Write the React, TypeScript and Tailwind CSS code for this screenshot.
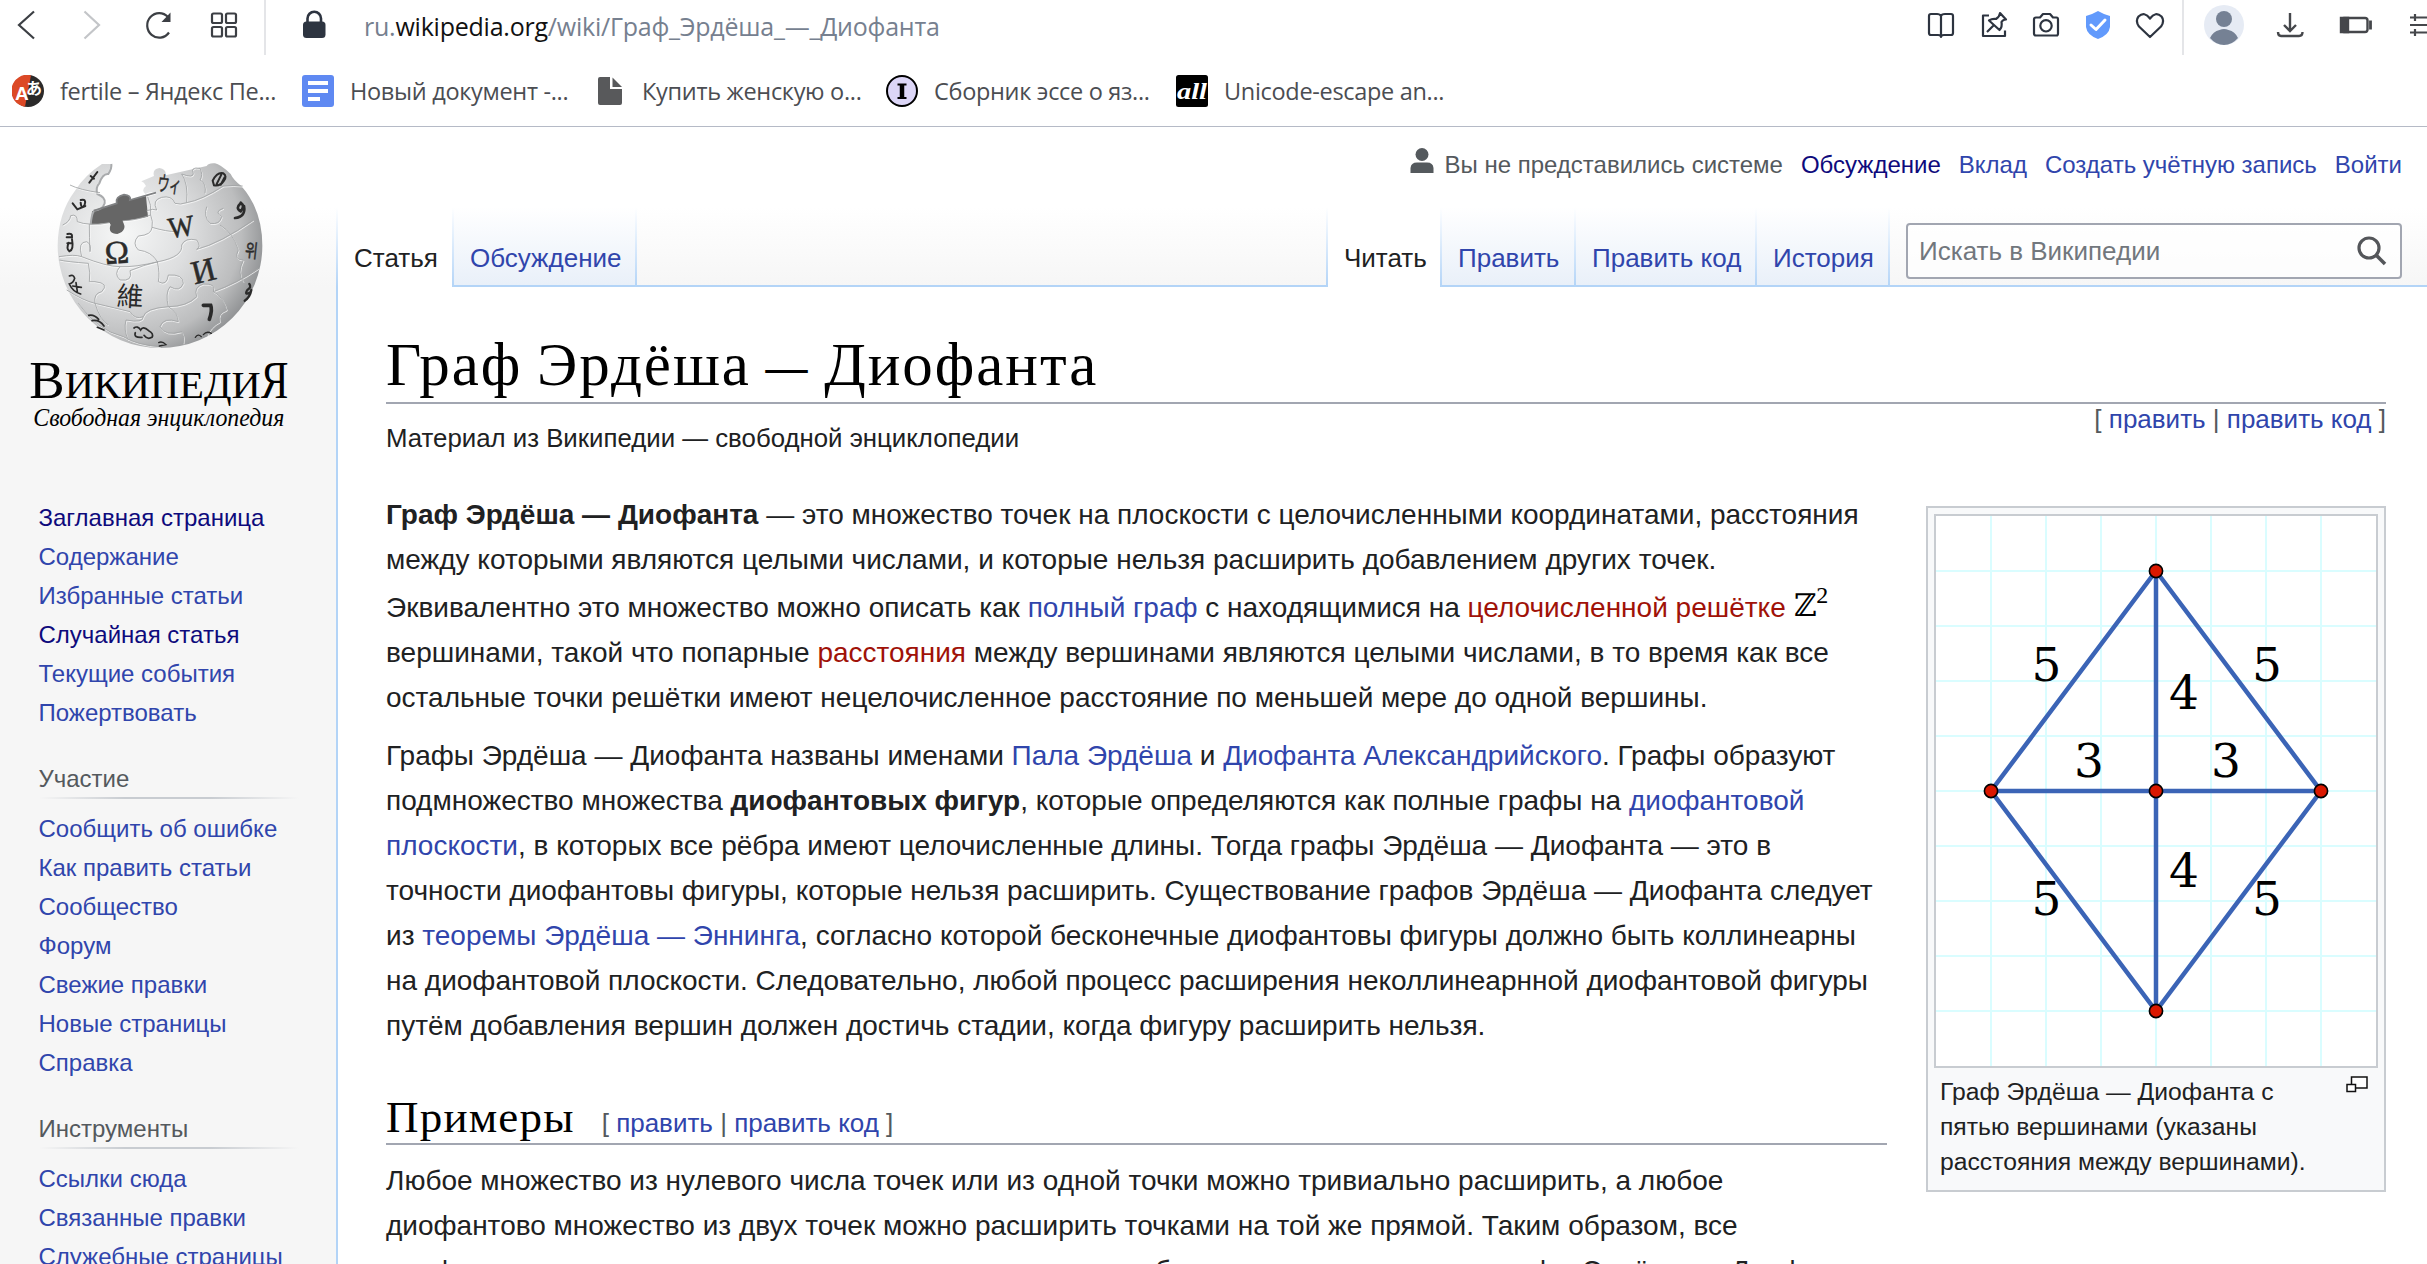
import React from "react";

const link = "text-[#3045ac]";
const visited = "text-[#0e0a7c]";
const red = "text-[#a01208]";

function A({ children, c = link }: { children: React.ReactNode; c?: string }) {
  return <a className={c}>{children}</a>;
}

function Toolbar() {
  return (
    <div className="flex h-[55px] shrink-0">
      <div className="flex w-[266px] shrink-0 items-start border-r-2 border-[#e4e5e8]">
        <svg width="264" height="50" viewBox="0 0 264 50" fill="none" stroke="#3c3f44" strokeWidth="2.2">
          <path d="M34 11.5 L19 25 L34 38.5" />
          <path d="M84.500 11.500 L99 25 L84.500 38.500" stroke="#c3c5c8" />
          <path d="M169 32.500 A12 12.300 0 1 1 168 17" />
          <path d="M170.500 12.500 L170.500 22 L161.500 22 Z" fill="#3c3f44" stroke="none" />
          <rect x="212" y="13.500" width="10" height="9.500" rx="1.500" />
          <rect x="226" y="13.500" width="10" height="9.500" rx="1.500" />
          <rect x="212" y="27" width="10" height="9.500" rx="1.500" />
          <rect x="226" y="27" width="10" height="9.500" rx="1.500" />
        </svg>
      </div>
      <svg width="98" height="50" viewBox="266 0 98 50" className="shrink-0">
        <rect x="303" y="21.500" width="22.500" height="16.500" rx="3.500" fill="#2d3440" />
        <path d="M307.500 23 V18.500 A6.700 6.700 0 0 1 321 18.500 V23" fill="none" stroke="#2d3440" strokeWidth="2.600" />
      </svg>
      <div className="flex-1 whitespace-nowrap font-['Open_Sans',sans-serif] text-[25px] leading-[52px] tracking-[-0.230px] text-[#76808f]">
        ru.<span className="text-[#111]">wikipedia.org</span>/wiki/Граф_Эрдёша_—_Диофанта
      </div>
      <div className="flex w-[266px] shrink-0 items-start border-r-2 border-[#e4e5e8]">
        <svg width="264" height="50" viewBox="1918 0 264 50" fill="none" stroke="#2d3440" strokeWidth="2.200" strokeLinejoin="round">
          <path d="M1941 16 Q1940 14 1937 14 H1931 Q1929 14 1929 16 V33 Q1929 35 1931 35 H1938 Q1941 35 1941 37 Q1941 35 1944 35 H1951 Q1953 35 1953 33 V16 Q1953 14 1951 14 H1945 Q1941.500 14 1941 16 V36" />
          <path d="M1989 15.500 H1983 V36 H2005 V30.500" />
          <path d="M2000 13 L2006 19.500 Q2003 19.500 2001.500 22 Q2002.500 27 1999.500 30 L1989 20.500 Q1992 18.500 1996 19 Q2000 16 2000 13 Z M1994 25 L1987 32" />
          <path d="M2036 17.500 H2040 L2043 14 H2050 L2053 17.500 H2056.500 Q2058 17.500 2058 19.500 V33.500 Q2058 35.500 2056.500 35.500 H2036 Q2034 35.500 2034 33.500 V19.500 Q2034 17.500 2036 17.500 Z" />
          <circle cx="2046" cy="25.800" r="5.700" />
          <path d="M2098 11 Q2103 14 2110 16 V27 Q2109 35 2098 39 Q2087 35 2086 27 V16 Q2093 14 2098 11 Z" fill="#629afc" stroke="none" />
          <path d="M2091 25 L2096 29.500 L2105 20" stroke="#fff" strokeWidth="3" strokeLinecap="round" />
          <path d="M2150 37 L2139 26.500 Q2135 21 2138.500 16.500 Q2144.500 11 2150 18.500 Q2155.500 11 2161.500 16.500 Q2165 21 2161 26.500 Z" />
        </svg>
      </div>
      <svg width="243" height="50" viewBox="2184 0 243 50" fill="none" stroke="#45474b" strokeWidth="2.400" className="shrink-0">
        <circle cx="2224" cy="25" r="20" fill="#e6ebf4" stroke="none" />
        <circle cx="2224" cy="19" r="8" fill="#758194" stroke="none" />
        <path d="M2210 38 Q2213 31.500 2219.500 30 Q2224 28 2228.500 30 Q2235 31.500 2238 38 Q2232 45 2224 45 Q2216 45 2210 38 Z" fill="#758194" stroke="none" />
        <path d="M2290 13 V31 M2284 25 L2290 31 L2296 25 M2278 32 Q2278 36 2281 36 H2299 Q2302.500 36 2302.500 32" />
        <rect x="2341.500" y="18" width="26" height="14" rx="2.500" />
        <path d="M2341 18 H2348 V32 H2341 Z" fill="#45474b" />
        <path d="M2370.500 20.500 V29.500" strokeWidth="2.800" />
        <path d="M2410 17.500 H2427 M2410 25 H2427 M2410 32.500 H2427 M2415 14 V21 M2415 29 V36" strokeWidth="2.200" />
      </svg>
    </div>
  );
}

const bookmarks = [
  { w: "w-[290px]", gap: "gap-4", t: "fertile – Яндекс Пе..." },
  { w: "w-[296px]", gap: "gap-4", t: "Новый документ -..." },
  { w: "w-[288px]", gap: "gap-5", t: "Купить женскую о..." },
  { w: "w-[290px]", gap: "gap-4", t: "Сборник эссе о яз..." },
  { w: "w-[290px]", gap: "gap-4", t: "Unicode-escape an..." },
];

function BookmarkIcon({ i }: { i: number }) {
  if (i === 0)
    return (
      <svg width="32" height="32" viewBox="0 0 32 32" className="shrink-0">
        <circle cx="16" cy="16" r="16" fill="#2b2a2a" />
        <path d="M19 0.300 A16 16 0 1 0 13 31.700 Z" fill="#dc4926" />
        <text x="3" y="25" fontSize="19" fontFamily="Liberation Sans" fontWeight="700" fill="#fff">A</text>
        <text x="14" y="19" fontSize="16" fontFamily="Noto Sans CJK JP" fontWeight="700" fill="#fff">あ</text>
      </svg>
    );
  if (i === 1)
    return (
      <svg width="32" height="32" viewBox="0 0 32 32" className="shrink-0">
        <rect width="32" height="32" rx="3" fill="#5f89f2" />
        <path d="M6 8 H26 M6 16 H26 M6 24 H18" stroke="#fff" strokeWidth="4" />
      </svg>
    );
  if (i === 2)
    return (
      <svg width="24" height="32" viewBox="0 0 24 32" className="shrink-0">
        <path d="M2 2 H12 V14 H24 V28 Q24 30 22 30 H2 Q0 30 0 28 V4 Q0 2 2 2 Z" fill="#58595b" />
        <path d="M14.500 2.500 L24 12 H14.500 Z" fill="#58595b" />
      </svg>
    );
  if (i === 3)
    return (
      <svg width="32" height="32" viewBox="0 0 32 32" className="shrink-0">
        <circle cx="16" cy="16" r="15" fill="#dcd6f7" stroke="#000" strokeWidth="2" />
        <path d="M11.500 9.500 H20.500 M11.500 23 H20.500" stroke="#000" strokeWidth="2" />
        <path d="M16 9 V23" stroke="#000" strokeWidth="4.500" />
      </svg>
    );
  return (
    <svg width="32" height="32" viewBox="0 0 32 32" className="shrink-0">
      <rect width="32" height="32" rx="2.500" fill="#000" />
      <text x="1" y="24" fontSize="23" textLength="30" lengthAdjust="spacingAndGlyphs" fontFamily="Liberation Serif" fontStyle="italic" fontWeight="700" fill="#fff">all</text>
    </svg>
  );
}

function Bookmarks() {
  return (
    <div className="flex h-[71px] shrink-0 pl-3 pt-1">
      {bookmarks.map((b, i) => (
        <div key={i} className={"flex h-16 shrink-0 items-center whitespace-nowrap " + b.w + " " + b.gap}>
          <BookmarkIcon i={i} />
          <span className="font-['Open_Sans',sans-serif] text-[23.500px] leading-8 tracking-[-0.310px] text-[#4b4d52]">{b.t}</span>
        </div>
      ))}
    </div>
  );
}

function Globe() {
  const seams = [
    "M150 105 Q180 120 240 128",
    "M128 225 Q150 215 152 197 Q172 190 172 215 Q190 222 208 222",
    "M208 222 Q240 225 268 218 M308 212 Q345 212 392 195 Q396 165 383 140",
    "M392 195 Q400 215 396 232 Q440 245 470 245 M380 182 Q400 175 410 180 Q395 150 425 142 Q455 135 465 160 Q480 165 500 158 Q545 150 610 108",
    "M610 108 Q640 105 668 108 M500 158 Q505 100 485 72 M485 72 Q520 85 520 70 Q510 50 540 55 Q550 75 540 90 Q560 100 555 130",
    "M117 320 Q165 312 185 320 Q172 275 200 275 Q215 282 210 305 Q208 262 208 222",
    "M185 320 Q260 350 300 350 Q345 352 415 335 Q490 320 485 285 Q495 262 530 270 Q545 290 530 298 Q600 280 700 210",
    "M396 232 Q395 255 355 258 Q335 280 355 300 Q395 305 412 335 Q420 370 415 395 Q440 410 445 375 Q490 372 490 400 Q480 428 450 410 Q435 430 445 470",
    "M118 330 Q140 335 205 340 Q212 370 208 395 M300 350 Q280 372 300 390 Q340 395 330 362 Q370 345 415 335",
    "M140 420 Q190 452 225 460 Q220 430 245 425 Q270 400 225 395 L208 395",
    "M225 460 Q290 475 330 485 Q345 510 370 500 Q375 475 445 470 Q500 470 530 440 Q520 410 550 402 Q590 400 580 425 Q650 400 715 355",
    "M560 170 Q550 200 570 220 Q600 225 605 200 Q580 185 610 175 M600 225 Q640 250 655 300 Q640 330 670 330 Q650 370 670 395",
    "M445 470 Q475 490 475 515 Q430 500 420 530 Q435 560 485 545 Q495 560 490 580",
    "M225 460 Q240 510 265 525 M370 500 Q370 520 318 510 Q310 540 325 570 M580 425 Q610 440 620 480 M620 480 Q590 490 600 515 Q570 530 560 560",
    "M175 460 Q230 540 310 560 Q350 585 420 590",
  ];
  const glyph = "#2b2b2b";
  return (
    <svg width="280" height="290" viewBox="0 0 840 870" className="shrink-0">
      <defs>
        <radialGradient id="ball" cx="0.320" cy="0.380" r="0.720">
          <stop offset="0" stopColor="#f6f7f7" />
          <stop offset="0.450" stopColor="#dddedf" />
          <stop offset="0.800" stopColor="#bcbdbe" />
          <stop offset="1" stopColor="#8c8e90" />
        </radialGradient>
      </defs>
      <path
        d="M274 42 Q276 55 265 72 Q248 70 238 100 Q226 112 232 132 Q258 142 254 160 Q248 180 222 182 Q214 195 212 225 L268 218 Q276 226 270 236 Q280 254 300 250 Q318 240 308 214 L383 200 L378 142 L410 132 Q400 120 376 132 Q362 120 378 108 Q372 96 364 94 L402 78 Q396 58 418 54 Q440 58 437 76 L560 48 Q566 38 585 40 Q600 42 632 72 Q640 90 664 108 Q727 180 727 287 A307 307 0 0 1 113 287 Q114 190 165 122 Q195 75 246 42 Z"
        fill="url(#ball)"
      />
      <path d="M213 224 L216 184 Q240 176 290 160 Q285 140 312 134 Q335 136 330 150 L378 138 L384 201 L308 214 Q324 242 292 252 Q262 250 272 224 L268 218 Z" fill="#666" />
      <path d="M274 42 Q276 55 265 72 Q248 70 238 100 Q226 112 232 132 Q258 142 254 160 Q248 180 222 182 Q214 195 212 225" fill="none" stroke="#a9abad" strokeWidth="6" />
      <path d="M222 182 Q244 175 290 160 Q285 140 312 134 Q335 136 330 150 L408 128" fill="none" stroke="#808284" strokeWidth="5" />
      <g fill="none" stroke="#fff" strokeWidth="3" transform="translate(2 3)" opacity="0.700">
        {seams.map((d, i) => <path key={i} d={d} />)}
      </g>
      <g fill="none" stroke="#a1a3a5" strokeWidth="2.500">
        {seams.map((d, i) => <path key={i} d={d} />)}
      </g>
      <g fill={glyph} stroke={glyph} strokeWidth="1.500" fontFamily="'Liberation Serif','Noto Sans CJK JP',serif">
        <text x="254" y="340" fontSize="98" transform="rotate(-4 290 310)">Ω</text>
        <text x="444" y="260" fontSize="88" textLength="78" lengthAdjust="spacingAndGlyphs" transform="rotate(-8 480 230)">W</text>
        <text x="514" y="396" fontSize="100" textLength="72" lengthAdjust="spacingAndGlyphs" transform="rotate(-14 550 360)">И</text>
        <text x="290" y="468" fontSize="80" strokeWidth="0" fontFamily="Noto Sans CJK TC" transform="rotate(3 330 440)">維</text>
        <text x="412" y="126" fontSize="62" textLength="72" lengthAdjust="spacingAndGlyphs" fontFamily="Noto Sans CJK JP" transform="rotate(8 450 105)">ウィ</text>
        <text x="676" y="322" fontSize="56" textLength="38" lengthAdjust="spacingAndGlyphs" fontFamily="Noto Sans CJK KR" transform="rotate(6 695 300)">위</text>
      </g>
      <g fill="none" stroke={glyph} strokeWidth="8" strokeLinecap="round">
        <path d="M550 466 H572 Q578 480 568 508" strokeWidth="11" />
        <path d="M662 160 Q645 175 662 184 Q676 168 662 158 M672 168 Q678 200 645 204" />
        <path d="M578 92 Q592 65 610 70 Q622 78 612 92 Q600 110 582 106 Z M590 102 L604 74 M602 104 L614 82" strokeWidth="6" />
        <path d="M142 252 Q158 248 156 262 H140 M156 268 Q162 300 148 304 Q138 296 146 278 M142 280 H156" strokeWidth="6" />
        <path d="M148 378 Q160 372 164 385 Q160 400 148 402 Q158 425 182 432 M168 398 L172 425 M158 408 L184 412" strokeWidth="5" />
        <path d="M158 160 L172 178 L196 168 M182 150 Q200 145 194 164 Q184 180 182 158 M208 98 L232 66 M212 78 L222 86" strokeWidth="6" />
        <path d="M206 496 Q222 492 236 508 M216 512 Q238 508 252 528 M232 532 L252 540" strokeWidth="5" />
        <path d="M342 534 Q352 526 362 540 Q368 526 386 542 Q402 550 396 562 Q382 570 372 556 M346 548 Q340 564 366 562" strokeWidth="5" />
        <path d="M688 402 Q696 412 682 420 Q672 436 690 428 M694 420 Q690 442 674 452" strokeWidth="7" />
        <path d="M526 562 Q534 550 544 560 M550 554 Q560 542 574 550 M416 578 Q426 572 438 584 L418 588" strokeWidth="4" />
      </g>
      <g fontFamily="'Liberation Serif',serif" fill="#000">
        <text x="28" y="743" fontSize="159" textLength="106" lengthAdjust="spacingAndGlyphs">В</text>
        <text x="134" y="743" fontSize="114" textLength="588" lengthAdjust="spacingAndGlyphs">ИКИПЕДИ</text>
        <text x="722" y="743" fontSize="159" textLength="83" lengthAdjust="spacingAndGlyphs">Я</text>
        <text x="40" y="828" fontSize="76" fontStyle="italic" textLength="753" lengthAdjust="spacingAndGlyphs">Свободная энциклопедия</text>
      </g>
    </svg>
  );
}

function NavGroup({ title, items, dark = [] }: { title?: string; items: string[]; dark?: number[] }) {
  return (
    <nav className="flex flex-col">
      {title && (
        <>
          <h3 className="h-[30px] leading-[30px] text-[#54595d]">{title}</h3>
          <div className="mb-[10px] mt-[3px] h-[2px] w-[260px] bg-[linear-gradient(to_right,rgba(200,204,209,0)_0%,#c8ccd1_33%,#c8ccd1_66%,rgba(200,204,209,0)_100%)]" />
        </>
      )}
      {items.map((t, i) => (
        <a key={t} className={"h-[39px] leading-[39px] " + (dark.includes(i) ? visited : link)}>{t}</a>
      ))}
    </nav>
  );
}

function Sidebar() {
  return (
    <aside className="flex w-[336px] shrink-0 flex-col whitespace-nowrap text-[24px]">
      <div className="pl-5 pt-[23px]"><Globe /></div>
      <div className="flex flex-col gap-[32px] pl-[38.500px] pt-[58px]">
        <NavGroup items={["Заглавная страница", "Содержание", "Избранные статьи", "Случайная статья", "Текущие события", "Пожертвовать"]} dark={[0, 3]} />
        <NavGroup title="Участие" items={["Сообщить об ошибке", "Как править статьи", "Сообщество", "Форум", "Свежие правки", "Новые страницы", "Справка"]} />
        <NavGroup title="Инструменты" items={["Ссылки сюда", "Связанные правки", "Служебные страницы"]} />
      </div>
    </aside>
  );
}

function Divider() {
  return <div className="w-[2px] shrink-0 bg-linear-to-b from-white to-[#b3d4f7]" />;
}

function Tab({ t, w, active }: { t: string; w: string; active?: boolean }) {
  return (
    <>
      <div
        className={
          "shrink-0 border-b-2 pl-4 pt-[31px] leading-[40px] " + w +
          (active ? " border-white bg-white text-[#202122]" : " border-[#b3d4f7] bg-linear-to-b from-white to-[#e9f0f9] text-[#3045ac]")
        }
      >
        {t}
      </div>
      <Divider />
    </>
  );
}

function Header() {
  return (
    <header className="flex h-[160px] shrink-0 flex-col">
      <div className="flex h-20 justify-end gap-[18px] pr-[25px] pt-[21px] text-[24px] leading-[34px]">
        <span className="flex text-[#54595d]">
          <svg width="34" height="26" viewBox="0 0 34 26">
            <ellipse cx="12" cy="6.500" rx="6.500" ry="6.500" fill="#54595d" />
            <path d="M0.500 25 V20 Q1 14.500 7 14.500 H17 Q23 14.500 23.500 20 V25 Z" fill="#54595d" />
          </svg>
          Вы не представились системе
        </span>
        <A c={visited}>Обсуждение</A>
        <A>Вклад</A>
        <A>Создать учётную запись</A>
        <A>Войти</A>
      </div>
      <div className="flex h-20 text-[26px]">
        <Divider />
        <Tab t="Статья" w="w-[114px]" active />
        <Tab t="Обсуждение" w="w-[181px]" />
        <div className="flex-1 border-b-2 border-[#b3d4f7]" />
        <Divider />
        <Tab t="Читать" w="w-[112px]" active />
        <Tab t="Править" w="w-[132px]" />
        <Tab t="Править код" w="w-[179px]" />
        <Tab t="История" w="w-[131px]" />
        <div className="w-[537px] shrink-0 border-b-2 border-[#b3d4f7] pl-4 pt-4">
          <div className="flex h-14 w-[496px] items-center justify-between rounded-[4px] border-2 border-[#a2a6b1] bg-white/70 pl-[11px] pr-[13px] text-[#72777d]">
            <span>Искать в Википедии</span>
            <svg width="30" height="30" viewBox="0 0 30 30" fill="none" stroke="#54565a">
              <circle cx="12" cy="12" r="10" strokeWidth="3.200" />
              <path d="M18.500 18.500 L28 28" strokeWidth="3.600" />
            </svg>
          </div>
        </div>
      </div>
    </header>
  );
}

function EditLinks() {
  return (
    <span className="whitespace-nowrap font-['Liberation_Sans',sans-serif] text-[26px] text-[#54595d]">
      [ <A>править</A> | <A>править код</A> ]
    </span>
  );
}

function GraphFigure() {
  const n = (a: number) => Array.from({ length: a }, (_, i) => (i + 1) * 55);
  const labels: [string, number, number][] = [
    ["5", 110.5, 165], ["5", 331, 165], ["4", 248, 193], ["3", 153, 260.5],
    ["3", 290, 260.5], ["4", 248, 370.5], ["5", 110.5, 398.5], ["5", 331, 398.5],
  ];
  return (
    <svg width="440" height="550" viewBox="0 0 440 550" className="block bg-white">
      <g stroke="#dafdff" strokeWidth="2">
        {n(7).map((x) => <path key={x} d={`M${x} 0 V550`} />)}
        {n(9).map((y) => <path key={y} d={`M0 ${y} H440`} />)}
      </g>
      <path d="M220 55 L385 275 L220 495 L55 275 Z M220 55 V495 M55 275 H385" fill="none" stroke="#3b64b6" strokeWidth="4.500" />
      {[[220, 55], [385, 275], [220, 495], [55, 275], [220, 275]].map(([x, y]) => (
        <circle key={`${x}-${y}`} cx={x} cy={y} r="6.600" fill="#da1800" stroke="#000" strokeWidth="1.600" />
      ))}
      <g fontFamily="'DejaVu Serif',serif" fontSize="47" textAnchor="middle">
        {labels.map(([t, x, y], i) => <text key={i} x={x} y={y}>{t}</text>)}
      </g>
    </svg>
  );
}

function Thumb() {
  return (
    <figure className="mt-[14px] flex h-[686px] w-[460px] shrink-0 flex-col border-2 border-[#c8ccd1] bg-[#f8f9fa] p-[6px]">
      <div className="w-[444px] border-2 border-[#c8ccd1]"><GraphFigure /></div>
      <figcaption className="flex justify-between whitespace-nowrap pl-[6px] pt-[6px] text-[24.700px] leading-[35px]">
        <span>
          Граф Эрдёша — Диофанта с<br />пятью вершинами (указаны<br />расстояния между вершинами).
        </span>
        <svg width="22" height="18" viewBox="0 0 22 18" fill="#fff" stroke="#111" strokeWidth="1.500" className="-ml-8 mr-[10px] mt-[2px]">
          <rect x="5.500" y="1" width="15.500" height="11" />
          <rect x="1" y="8.500" width="8.500" height="7" />
        </svg>
      </figcaption>
    </figure>
  );
}

function Article() {
  return (
    <main className="flex flex-1 flex-col border-l-2 border-[#b3d4f7] bg-white pl-12 pr-[41px] text-[28px] leading-[45px] text-[#202122]">
      <div className="h-[117px] border-b-2 border-[#a2a6b1] pt-[38px]">
        <h1 className="whitespace-nowrap font-['Liberation_Serif',serif] text-[61px] leading-[80px] tracking-[1.950px] [word-spacing:-2.500px] text-black">
          Граф Эрдёша <span className="align-[4px] text-[42px] font-bold leading-none">—</span> Диофанта
        </h1>
      </div>
      <div className="flex h-[88px] justify-between">
        <div className="pt-[12px] text-[25.800px]">Материал из Википедии — свободной энциклопедии</div>
        <div className="-mt-[8px]"><EditLinks /></div>
      </div>
      <div className="flex justify-between whitespace-nowrap">
        <div className="w-[1501px]">
          <p className="h-[228px]">
            <b>Граф Эрдёша — Диофанта</b> — это множество точек на плоскости с целочисленными координатами, расстояния<br />
            между которыми являются целыми числами, и которые нельзя расширить добавлением других точек.
            <span className="flex h-[48px] pt-[3px]">
              <span>Эквивалентно это множество можно описать как <A>полный граф</A> с находящимися на <A c={red}>целочисленной решётке</A></span>
              <span className="-mt-[2px] ml-[8px] font-['DejaVu_Serif','DejaVu_Sans',serif] text-[31px] text-black">ℤ</span>
              <span className="-mt-[12px] font-['Liberation_Serif',serif] text-[24px] text-black">2</span>
            </span>
            вершинами, такой что попарные <A c={red}>расстояния</A> между вершинами являются целыми числами, в то время как все<br />
            остальные точки решётки имеют нецелочисленное расстояние по меньшей мере до одной вершины.
          </p>
          <p className="mt-[13px]">
            Графы Эрдёша — Диофанта названы именами <A>Пала Эрдёша</A> и <A>Диофанта Александрийского</A>. Графы образуют<br />
            подмножество множества <b>диофантовых фигур</b>, которые определяются как полные графы на <A>диофантовой</A><br />
            <A>плоскости</A>, в которых все рёбра имеют целочисленные длины. Тогда графы Эрдёша — Диофанта — это в<br />
            точности диофантовы фигуры, которые нельзя расширить. Существование графов Эрдёша — Диофанта следует<br />
            из <A>теоремы Эрдёша — Эннинга</A>, согласно которой бесконечные диофантовы фигуры должно быть коллинеарны<br />
            на диофантовой плоскости. Следовательно, любой процесс расширения неколлинеарнной диофантовой фигуры<br />
            путём добавления вершин должен достичь стадии, когда фигуру расширить нельзя.
          </p>
          <div className="flex h-[97px] items-baseline gap-[27px] border-b-2 border-[#a2a6b1] pt-[39px]">
            <h2 className="font-['Liberation_Serif',serif] text-[45px] leading-[60px] tracking-[1.200px] text-black">Примеры</h2>
            <EditLinks />
          </div>
          <p className="mt-[13px]">
            Любое множество из нулевого числа точек или из одной точки можно тривиально расширить, а любое<br />
            диофантово множество из двух точек можно расширить точками на той же прямой. Таким образом, все<br />
            диофантовы множества с менее чем тремя точками могут быть расширены, так что графы Эрдёша — Диофанта
          </p>
        </div>
        <Thumb />
      </div>
    </main>
  );
}

export default function App() {
  return (
    <div className="flex h-[1264px] w-[2427px] flex-col overflow-hidden bg-white font-['Liberation_Sans',Arial,sans-serif]">
      <Toolbar />
      <Bookmarks />
      <div className="flex h-[1138px] shrink-0 overflow-hidden border-t border-[#b5bac6] bg-[linear-gradient(#fff_0,#fff_80px,#f6f6f6_160px)]">
        <Sidebar />
        <div className="flex w-[2091px] shrink-0 flex-col">
          <Header />
          <Article />
        </div>
      </div>
    </div>
  );
}
